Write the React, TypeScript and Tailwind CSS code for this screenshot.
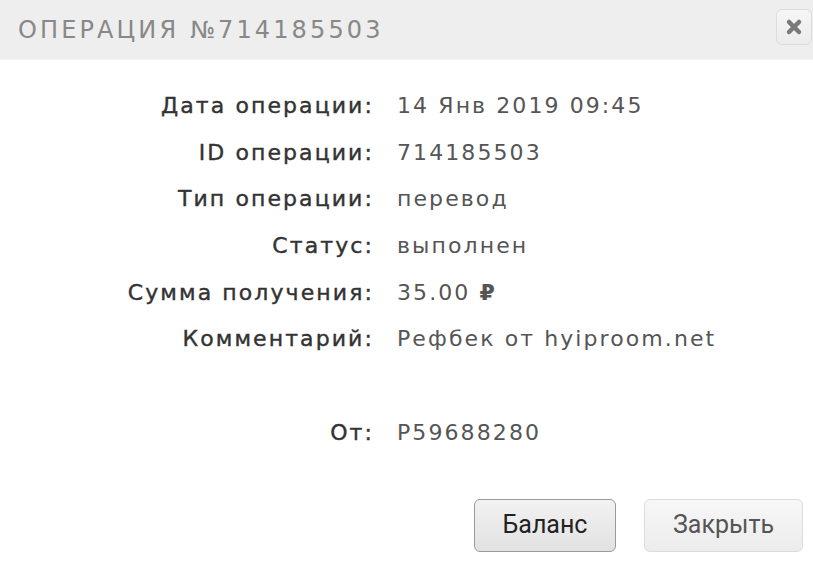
import type { ReactNode } from 'react';

const rows: [string, ReactNode][] = [
  ['Дата операции:', '14 Янв 2019 09:45'],
  ['ID операции:', '714185503'],
  ['Тип операции:', 'перевод'],
  ['Статус:', 'выполнен'],
  ['Сумма получения:', <>35.00 <span className="font-bold">₽</span></>],
  ['Комментарий:', 'Рефбек от hyiproom.net'],
  ['', ''],
  ['От:', 'P59688280'],
];

function CloseIcon() {
  return (
    <svg width="18" height="18" viewBox="0 0 18 18">
      <path d="M4 4 L14 14 M14 4 L4 14" stroke="#7a7a7a" strokeWidth="4.5" strokeLinecap="round" />
    </svg>
  );
}

export default function App() {
  return (
    <div className="w-[813px] h-[563px] bg-white overflow-hidden font-['DejaVu_Sans',sans-serif]">
      <header className="h-[60px] bg-[#eeeeee] border-b border-[#f4f4f4] flex items-center justify-between pl-[18px] pr-px">
        <h1 className="text-[24px] tracking-[0.13em] text-[#888] font-normal">ОПЕРАЦИЯ №714185503</h1>
        <button className="w-[36px] h-[36px] mb-[6px] rounded-[6px] border border-[#dcdcdc] bg-gradient-to-b from-[#f6f6f6] to-[#ececec] flex items-center justify-center">
          <CloseIcon />
        </button>
      </header>

      <div className="grid grid-cols-[372px_1fr] gap-x-[25px] pt-[22px] text-[22px] tracking-[0.095em]">
        {rows.map(([label, value], i) => (
          <div key={i} className="contents">
            <div className="h-[46.7px] flex items-center justify-end -mr-[2px] text-[#333] [-webkit-text-stroke:0.4px_#333]">{label}</div>
            <div className="h-[46.7px] flex items-center whitespace-pre text-[#555]">{value}</div>
          </div>
        ))}
      </div>

      <div className="flex justify-end gap-[28px] pr-[10px] pt-[43px] font-['Roboto',sans-serif] text-[25px]">
        <button className="w-[142px] h-[53px] rounded-[6px] border border-[#9a9a9a] bg-gradient-to-b from-[#f2f2f2] to-[#e2e2e2] text-[#222]">
          Баланс
        </button>
        <button className="w-[159px] h-[53px] rounded-[6px] border border-[#dcdcdc] bg-gradient-to-b from-[#f7f7f7] to-[#ececec] text-[#555]">
          Закрыть
        </button>
      </div>
    </div>
  );
}
